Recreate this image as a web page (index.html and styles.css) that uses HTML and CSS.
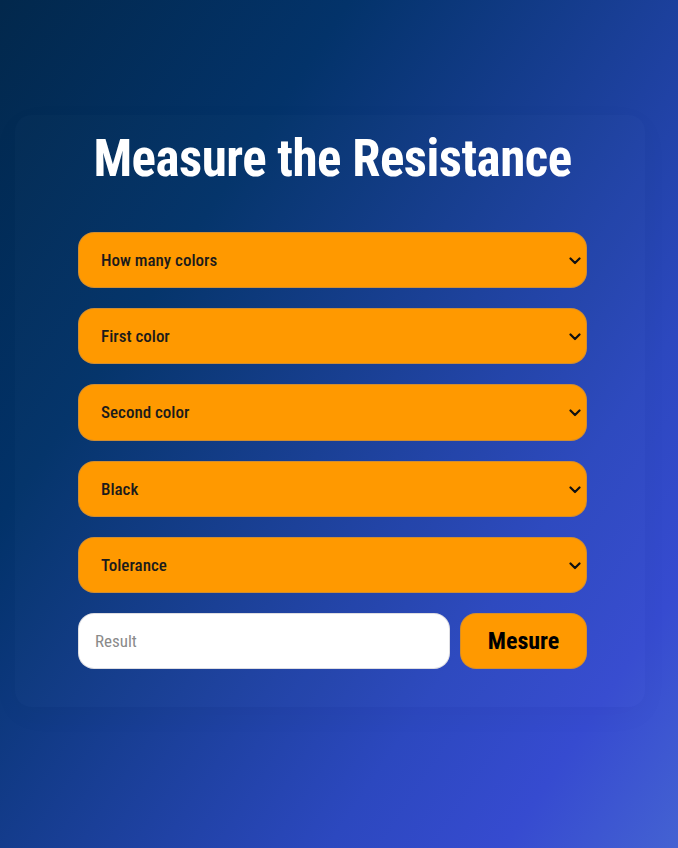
FILE: index.html
```html
<!DOCTYPE html>
<html lang="en">
<head>
<meta charset="utf-8">
<title>Measure the Resistance</title>
<link rel="stylesheet" href="styles.css">
</head>
<body>
<main class="page">
  <section class="card">
    <h1 class="title">Measure the Resistance</h1>
    <form class="form">
      <div class="select-wrap">
        <select class="select"><option>How many colors</option></select>
        <svg class="chev" viewBox="0 0 12 8" width="12" height="8"><path d="M1.5 1.5 L6 6 L10.5 1.5" fill="none" stroke="#111" stroke-width="2.2" stroke-linecap="round" stroke-linejoin="round"/></svg>
      </div>
      <div class="select-wrap">
        <select class="select"><option>First color</option></select>
        <svg class="chev" viewBox="0 0 12 8" width="12" height="8"><path d="M1.5 1.5 L6 6 L10.5 1.5" fill="none" stroke="#111" stroke-width="2.2" stroke-linecap="round" stroke-linejoin="round"/></svg>
      </div>
      <div class="select-wrap">
        <select class="select"><option>Second color</option></select>
        <svg class="chev" viewBox="0 0 12 8" width="12" height="8"><path d="M1.5 1.5 L6 6 L10.5 1.5" fill="none" stroke="#111" stroke-width="2.2" stroke-linecap="round" stroke-linejoin="round"/></svg>
      </div>
      <div class="select-wrap">
        <select class="select"><option>Black</option></select>
        <svg class="chev" viewBox="0 0 12 8" width="12" height="8"><path d="M1.5 1.5 L6 6 L10.5 1.5" fill="none" stroke="#111" stroke-width="2.2" stroke-linecap="round" stroke-linejoin="round"/></svg>
      </div>
      <div class="select-wrap">
        <select class="select"><option>Tolerance</option></select>
        <svg class="chev" viewBox="0 0 12 8" width="12" height="8"><path d="M1.5 1.5 L6 6 L10.5 1.5" fill="none" stroke="#111" stroke-width="2.2" stroke-linecap="round" stroke-linejoin="round"/></svg>
      </div>
      <div class="result-row">
        <input class="result" type="text" placeholder="Result" readonly>
        <button class="btn" type="button">Mesure</button>
      </div>
    </form>
  </section>
</main>
</body>
</html>
```
FILE: styles.css
```css
* { box-sizing: border-box; }
html, body { margin: 0; height: 100%; }
body {
  font-family: Roboto, "Noto Sans", sans-serif;
  background: linear-gradient(124deg, #02284c 0%, #03336a 28%, #1a3f98 52%, #2c48bf 72%, #364bd0 86%, #4462d2 100%);
  min-height: 848px;
}
.page {
  padding: 115px 33px 0 15px;
}
.card {
  width: 630px;
  height: 592px;
  border-radius: 16px;
  background: rgba(255,255,255,0.012);
  box-shadow: 0 8px 30px rgba(0,0,0,0.03);
  padding: 0 58px 0 63px;
}
.title {
  margin: 0;
  padding-top: 2px;
  height: 117px;
  color: #fff;
  font-family: Roboto, sans-serif;
  font-weight: 700;
  font-size: 51px;
  font-stretch: condensed;
  text-align: center;
  line-height: 84px;
  letter-spacing: -0.5px;
}
.form {
  display: flex;
  flex-direction: column;
  gap: 20px;
}
.select-wrap {
  position: relative;
}
.select {
  appearance: none;
  -webkit-appearance: none;
  display: block;
  width: 100%;
  height: 56.2px;
  border: 1px solid rgba(120,120,140,0.35);
  border-radius: 16px;
  background: #ff9900;
  color: #1b1b1b;
  font-family: Roboto, sans-serif;
  font-weight: 500;
  font-size: 17px;
  font-stretch: condensed;
  padding: 0 22px;
  outline: none;
}
.chev {
  position: absolute;
  right: 6px;
  top: 25px;
  pointer-events: none;
}
.result-row {
  display: flex;
  gap: 10px;
}
.result {
  flex: 1;
  min-width: 0;
  height: 56px;
  border: 1px solid rgba(120,120,140,0.25);
  border-radius: 16px;
  background: #fff;
  padding: 0 16px;
  font-family: Roboto, sans-serif;
  font-size: 17px;
  font-stretch: condensed;
  color: #333;
  outline: none;
}
.result::placeholder { color: #8a8a8a; }
.btn {
  width: 127px;
  height: 56px;
  border: 1px solid rgba(120,120,140,0.3);
  border-radius: 16px;
  background: #ff9900;
  color: #000;
  font-family: Roboto, sans-serif;
  font-weight: 700;
  font-size: 24px;
  font-stretch: condensed;
  cursor: pointer;
}
```
